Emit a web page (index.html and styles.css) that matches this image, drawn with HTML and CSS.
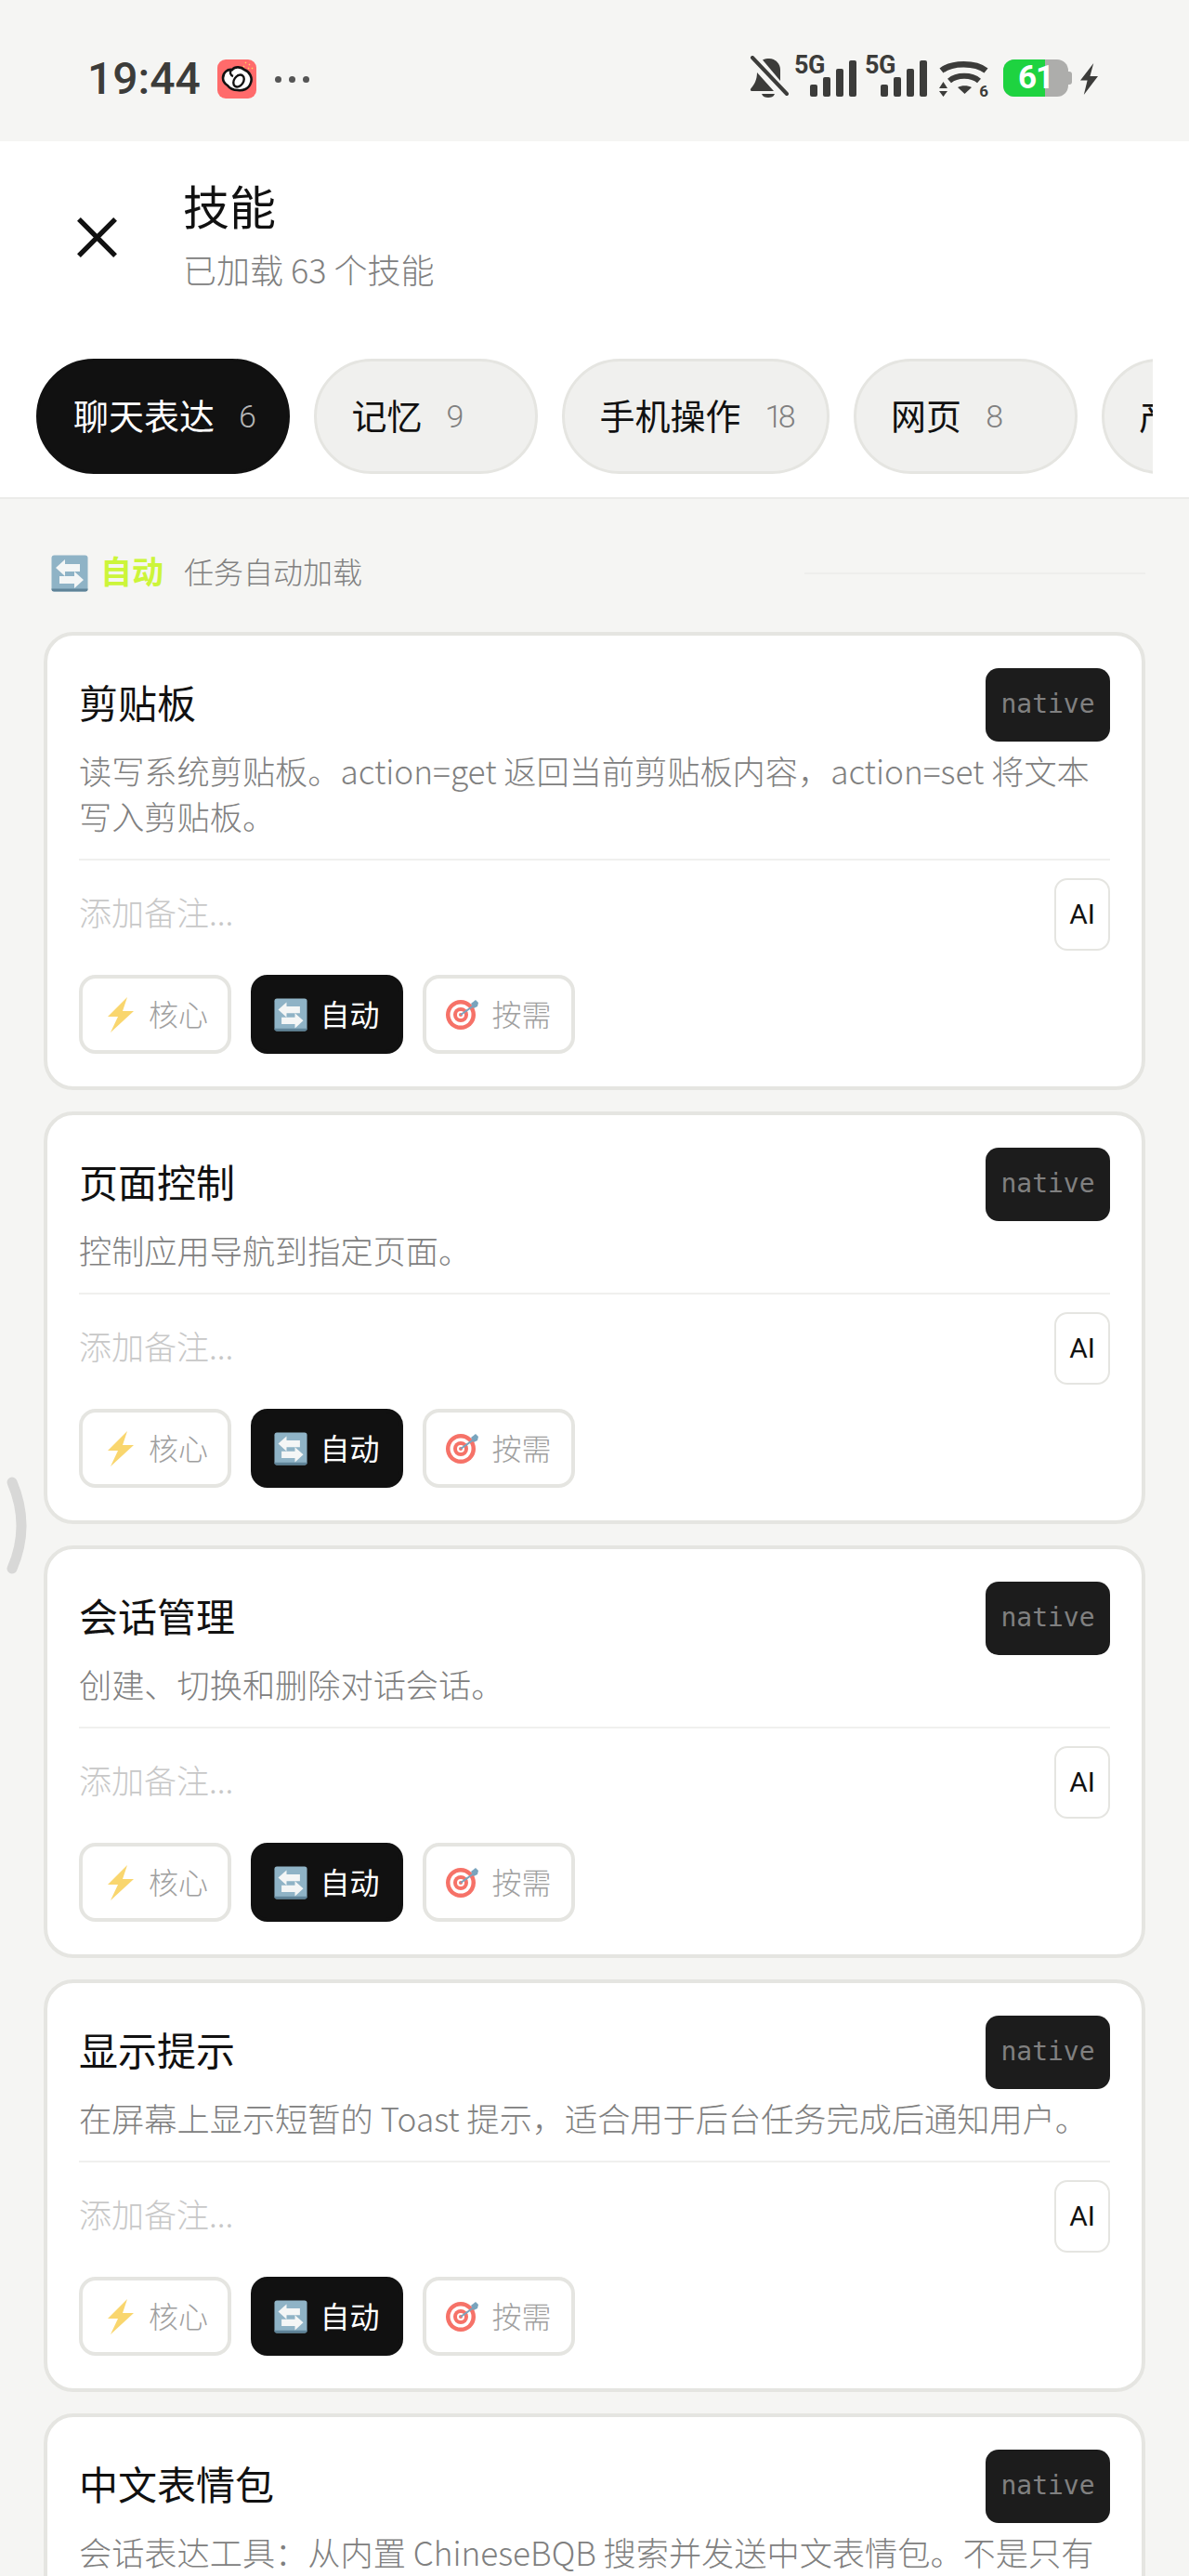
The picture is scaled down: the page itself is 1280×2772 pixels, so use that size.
FILE: index.html
```html
<!DOCTYPE html>
<html lang="zh-CN">
<head>
    <meta charset="UTF-8">
    <meta name="viewport" content="width=device-width, initial-scale=1.0">
    <title>技能</title>
    <link rel="stylesheet" href="styles.css">
</head>
<body>
    <!-- shared emoji pictures, no emoji font on the box -->
    <svg class="defs" width="0" height="0">
        <symbol id="i-cycle" viewBox="0 0 40 40">
            <rect x="0.5" y="0.5" width="39" height="39" rx="3" fill="#8fb3c6"/>
            <path d="M0.5 36.5h39v0.5a2.5 2.5 0 0 1-2.5 2.5h-34a2.5 2.5 0 0 1-2.5-2.5z" fill="#5f8398"/>
            <path d="M5 15 L15 6 V11 H31 V19 H15 V24 Z" fill="#f4f6f6" transform="translate(0 -1)"/>
            <path d="M35 26 L25 35 V30 H9 V22 H25 V17 Z" fill="#f4f6f6" transform="translate(0 1)"/>
        </symbol>
        <symbol id="i-bolt" viewBox="0 0 28 38">
            <path d="M21 0 L0 21 H11 L3 38 L28 15 H16 Z" fill="#f8c93e"/>
        </symbol>
        <symbol id="i-target" viewBox="0 3 36 36">
            <circle cx="16" cy="21" r="16" fill="#f44336"/>
            <circle cx="16" cy="21" r="11.5" fill="#fff"/>
            <circle cx="16" cy="21" r="8" fill="#f44336"/>
            <circle cx="16" cy="21" r="4" fill="#fff"/>
            <circle cx="16" cy="21" r="2" fill="#f44336"/>
            <path d="M16 21 L30 11" stroke="#4d86a8" stroke-width="2"/>
            <path d="M27 9 L32 5 L35 8 L34 12 L30 14 Z" fill="#4d86a8"/>
        </symbol>
    </svg>

    <div class="statusbar">
        <div class="status-left">
            <span class="clock">19:44</span>
            <svg class="app-icon" viewBox="0 0 42 42">
                <rect width="42" height="42" rx="9" fill="#ff6b6b"/>
                <path d="M30 3l1 1M34 5l1 1M37 9l1 1M33 9l1 1M28 7l1 1" stroke="#ffd75e" stroke-width="1.4"/>
                <path d="M6 20c0-6 5-10 10-9 3-4 10-3 13 0 6 2 9 9 7 14-2 7-9 9-14 8-4 0-8-1-11-5-3-2-5-5-5-8z" fill="#fff" stroke="#111" stroke-width="2.6"/>
                <ellipse cx="23" cy="23" rx="5" ry="7" transform="rotate(35 23 23)" fill="none" stroke="#111" stroke-width="2.4"/>
                <path d="M15 11c-2 3-1 6 2 7" fill="none" stroke="#111" stroke-width="2.4"/>
            </svg>
            <span class="dots"><i></i><i></i><i></i></span>
        </div>
        <div class="status-right">
            <svg class="ic-bell" viewBox="0 0 42 46">
                <path d="M14 4.5C16 3 19 3 21 3c7 0 12 6 12 12v12z" fill="#3c3c3a"/>
                <path d="M8 18L26 38H2.500C0.500 38 0.500 36 1.500 35 5 31 8 26 8 18z" fill="#3c3c3a"/>
                <path d="M13 41H27C26 44 23 45 20 45 17 45 14 44 13 41z" fill="#3c3c3a"/>
                <path d="M3 2L40 41" stroke="#3c3c3a" stroke-width="4" stroke-linecap="round"/>
            </svg>
            <span class="sim">
                <b>5G</b>
                <span class="bars"><i class="b1"></i><i class="b2"></i><i class="b3"></i><i class="b4"></i></span>
            </span>
            <span class="sim">
                <b>5G</b>
                <span class="bars"><i class="b1"></i><i class="b2"></i><i class="b3"></i><i class="b4"></i></span>
            </span>
            <span class="wifi">
                <svg viewBox="0 0 53 39" width="53" height="39">
                    <path d="M2.500 10C14 1 39 1 50.500 10" fill="none" stroke="#3c3c3a" stroke-width="6.500"/>
                    <path d="M11 21C19 14 35 14 43 21" fill="none" stroke="#3c3c3a" stroke-width="6"/>
                    <path d="M20 28C24 25.500 31 25.500 35 28L27.500 35z" fill="#3c3c3a"/>
                    <path d="M4.500 22L9 29H0zM0 32H9L4.500 38z" fill="#3c3c3a"/>
                </svg>
                <b>6</b>
            </span>
            <span class="battery">
                <span class="batt-body"><span class="batt-fill"></span><span class="batt-num">61</span></span>
                <span class="batt-cap"></span>
            </span>
            <svg class="ic-charge" viewBox="0 0 20 44" preserveAspectRatio="none">
                <path d="M15 0L0 24h8L4 44l16-26h-9z" fill="#3c3c3a"/>
            </svg>
        </div>
    </div>

    <div class="topbar">
        <div class="header">
            <svg class="close" viewBox="0 0 46 46">
                <path d="M3 3l40 40M43 3L3 43" stroke="#111" stroke-width="5.500"/>
            </svg>
            <div class="header-text">
                <div class="title">技能</div>
                <div class="subtitle">已加载 63 个技能</div>
            </div>
        </div>
        <div class="tabs">
            <div class="tab active">聊天表达<span class="count">6</span></div>
            <div class="tab">记忆<span class="count">9</span></div>
            <div class="tab">手机操作<span class="count">18</span></div>
            <div class="tab">网页<span class="count">8</span></div>
            <div class="tab">产品<span class="count">4</span></div>
        </div>
    </div>

    <div class="content">
        <div class="section-head">
            <svg class="emoji-lg"><use href="#i-cycle"/></svg>
            <span class="section-name">自动</span>
            <span class="section-desc">任务自动加载</span>
            <span class="section-line"></span>
        </div>

        <div class="card">
            <div class="card-head">
                <div class="card-title">剪贴板</div>
                <div class="badge">native</div>
            </div>
            <div class="card-desc">读写系统剪贴板。action=get 返回当前剪贴板内容，action=set 将文本写入剪贴板。</div>
            <div class="note-row">
                <span class="note">添加备注...</span>
                <span class="ai-btn">AI</span>
            </div>
            <div class="modes">
                <div class="mode"><svg class="emoji emoji-bolt"><use href="#i-bolt"/></svg>核心</div>
                <div class="mode on"><svg class="emoji"><use href="#i-cycle"/></svg>自动</div>
                <div class="mode"><svg class="emoji"><use href="#i-target"/></svg>按需</div>
            </div>
        </div>

        <div class="card">
            <div class="card-head">
                <div class="card-title">页面控制</div>
                <div class="badge">native</div>
            </div>
            <div class="card-desc">控制应用导航到指定页面。</div>
            <div class="note-row">
                <span class="note">添加备注...</span>
                <span class="ai-btn">AI</span>
            </div>
            <div class="modes">
                <div class="mode"><svg class="emoji emoji-bolt"><use href="#i-bolt"/></svg>核心</div>
                <div class="mode on"><svg class="emoji"><use href="#i-cycle"/></svg>自动</div>
                <div class="mode"><svg class="emoji"><use href="#i-target"/></svg>按需</div>
            </div>
        </div>

        <div class="card">
            <div class="card-head">
                <div class="card-title">会话管理</div>
                <div class="badge">native</div>
            </div>
            <div class="card-desc">创建、切换和删除对话会话。</div>
            <div class="note-row">
                <span class="note">添加备注...</span>
                <span class="ai-btn">AI</span>
            </div>
            <div class="modes">
                <div class="mode"><svg class="emoji emoji-bolt"><use href="#i-bolt"/></svg>核心</div>
                <div class="mode on"><svg class="emoji"><use href="#i-cycle"/></svg>自动</div>
                <div class="mode"><svg class="emoji"><use href="#i-target"/></svg>按需</div>
            </div>
        </div>

        <div class="card">
            <div class="card-head">
                <div class="card-title">显示提示</div>
                <div class="badge">native</div>
            </div>
            <div class="card-desc">在屏幕上显示短暂的 Toast 提示，适合用于后台任务完成后通知用户。</div>
            <div class="note-row">
                <span class="note">添加备注...</span>
                <span class="ai-btn">AI</span>
            </div>
            <div class="modes">
                <div class="mode"><svg class="emoji emoji-bolt"><use href="#i-bolt"/></svg>核心</div>
                <div class="mode on"><svg class="emoji"><use href="#i-cycle"/></svg>自动</div>
                <div class="mode"><svg class="emoji"><use href="#i-target"/></svg>按需</div>
            </div>
        </div>

        <div class="card">
            <div class="card-head">
                <div class="card-title">中文表情包</div>
                <div class="badge">native</div>
            </div>
            <div class="card-desc">会话表达工具：从内置 ChineseBQB 搜索并发送中文表情包。不是只有</div>
        </div>
    </div>

    <svg class="edge-handle" viewBox="0 0 40 124">
        <path d="M13 15Q33 62 13 108" fill="none" stroke="#d8d8d7" stroke-width="11" stroke-linecap="round"/>
    </svg>
</body>
</html>
```

FILE: styles.css
```css
* {
    box-sizing: border-box;
}
html, body {
    margin: 0;
    height: 2772px;
    overflow: hidden;
}
body {
    position: relative;
    background: #f5f5f3;
    color: #111;
    font-family: "Noto Sans CJK SC", Roboto, "Noto Sans", sans-serif;
}
.defs {
    position: absolute;
}

/* status bar */
.statusbar {
    height: 152px;
    padding: 60px 98px 0 94px;
    display: flex;
    justify-content: space-between;
    align-items: flex-start;
}
.status-left {
    display: flex;
    align-items: center;
    height: 46px;
    margin-top: 2px;
}
.clock {
    font-family: Roboto, sans-serif;
    font-weight: 500;
    font-size: 48px;
    line-height: 44px;
    color: #3c3c3a;
    width: 140px;
}
.app-icon {
    width: 42px;
    height: 42px;
}
.dots {
    display: flex;
    gap: 8px;
    margin-left: 20px;
}
.dots i {
    width: 7px;
    height: 7px;
    border-radius: 50%;
    background: #555;
}
.status-right {
    display: flex;
    align-items: flex-start;
}
.ic-bell {
    width: 42px;
    height: 46px;
}
.sim {
    position: relative;
    display: block;
    width: 66px;
    height: 44px;
    margin-left: 10px;
}
.ic-bell + .sim {
    margin-left: 7px;
}
.sim b {
    position: absolute;
    left: -1px;
    top: -4px;
    font-family: Roboto, sans-serif;
    font-size: 27px;
    line-height: 28px;
    color: #3c3c3a;
    letter-spacing: -0.5px;
}
.bars {
    position: absolute;
    right: 0;
    bottom: 0;
    display: flex;
    align-items: flex-end;
    gap: 6px;
}
.bars i {
    width: 8px;
    background: #3c3c3a;
    border-radius: 2px;
}
.b1 { height: 13px; }
.b2 { height: 21px; }
.b3 { height: 30px; }
.b4 { height: 39px; }
.wifi {
    position: relative;
    display: block;
    width: 53px;
    height: 39px;
    margin: 6px 0 0 13px;
}
.wifi svg {
    display: block;
}
.wifi b {
    position: absolute;
    right: 0;
    bottom: -2px;
    font-family: Roboto, sans-serif;
    font-size: 17px;
    line-height: 18px;
    color: #3c3c3a;
}
.battery {
    display: flex;
    align-items: center;
    margin: 4px 0 0 16px;
    height: 40px;
}
.batt-body {
    position: relative;
    display: block;
    width: 70px;
    height: 40px;
    border-radius: 12px;
    background: #adadab;
    overflow: hidden;
}
.batt-fill {
    position: absolute;
    left: 0;
    top: 0;
    bottom: 0;
    width: 45px;
    background: #1ed340;
}
.batt-num {
    position: absolute;
    left: 16px;
    top: 0;
    font-family: Roboto, sans-serif;
    font-weight: 700;
    font-size: 35px;
    line-height: 40px;
    color: #fff;
    letter-spacing: -1px;
}
.batt-cap {
    width: 4px;
    height: 14px;
    background: #adadab;
    border-radius: 0 3px 3px 0;
}
.ic-charge {
    width: 19px;
    height: 34px;
    margin: 8px 0 0 9px;
}

/* header + tabs */
.topbar {
    height: 385px;
    background: #fff;
    border-bottom: 2px solid #ebebe9;
}
.header {
    height: 234px;
    padding: 38px 0 0 82px;
    display: flex;
}
.close {
    width: 45px;
    height: 45px;
    margin-top: 43px;
}
.header-text {
    margin-left: 70px;
}
.title {
    font-size: 50px;
    line-height: 60px;
}
.subtitle {
    font-size: 36px;
    line-height: 50px;
    margin-top: 14px;
    color: #808080;
    font-weight: 300;
}
.tabs {
    display: flex;
    gap: 26px;
    padding-left: 39px;
    width: 1241px;
    overflow: hidden;
}
.tab {
    flex: none;
    min-width: 241px;
    height: 124px;
    padding: 0 38px 6px 37px;
    display: flex;
    align-items: center;
    background: #f0f0ee;
    border: 3px solid #e5e5e1;
    border-radius: 62px;
    font-size: 38px;
    white-space: nowrap;
}
.tab.active {
    background: #111;
    border-color: #111;
    color: #fff;
}
.count {
    margin-left: 26px;
    padding-top: 6px;
    font-family: Roboto, sans-serif;
    font-size: 34px;
    font-weight: 300;
    letter-spacing: -4.500px;
    color: #808080;
}
.tab.active .count {
    color: #b5b5b5;
}

/* skill list */
.content {
    padding: 0 47px;
}
.section-head {
    height: 143px;
    padding: 60px 0 0 8px;
    display: flex;
    align-items: flex-start;
}
.emoji-lg {
    width: 40px;
    height: 40px;
}
.section-name {
    margin: -3px 0 0 13px;
    font-size: 34px;
    line-height: 40px;
    font-weight: 700;
    color: #ccf53a;
}
.section-desc {
    margin: -3px 0 0 22px;
    font-size: 32px;
    line-height: 40px;
    font-weight: 300;
    color: #808080;
}
.section-line {
    flex: 1;
    height: 2px;
    margin: 19px 0 0 476px;
    background: #eeeeec;
}
.card {
    background: #fff;
    border: 4px solid #e5e5e1;
    border-radius: 32px;
    padding: 35px 34px 35px;
    margin-bottom: 23px;
}
.card-head {
    display: flex;
    justify-content: space-between;
    align-items: center;
    height: 79px;
}
.card-title {
    font-size: 42px;
    padding-bottom: 8px;
}
.badge {
    width: 134px;
    height: 79px;
    background: #1c1c1c;
    border-radius: 14px;
    text-align: center;
    font-family: "DejaVu Sans Mono", monospace;
    font-size: 28px;
    line-height: 78px;
    color: #808080;
}
.card-desc {
    margin-top: 6px;
    font-size: 35.200px;
    line-height: 49px;
    font-weight: 300;
    color: #808080;
}
.note-row {
    margin-top: 22px;
    padding-top: 19px;
    border-top: 2px solid #f0f0ee;
    display: flex;
    justify-content: space-between;
    align-items: center;
}
.note {
    padding-bottom: 8px;
    font-size: 35px;
    font-weight: 300;
    color: #c8c8c8;
}
.ai-btn {
    width: 60px;
    height: 78px;
    border: 2px solid #e5e5e1;
    border-radius: 14px;
    text-align: center;
    font-family: Roboto, sans-serif;
    font-size: 30px;
    line-height: 74px;
}
.modes {
    display: flex;
    gap: 21px;
    margin-top: 26px;
}
.mode {
    width: 164px;
    height: 85px;
    padding-bottom: 4px;
    border: 4px solid #e5e5e1;
    border-radius: 18px;
    display: flex;
    align-items: center;
    justify-content: center;
    font-size: 32px;
    font-weight: 300;
    color: #a0a0a0;
}
.mode.on {
    background: #111;
    border-color: #111;
    color: #fff;
    font-weight: 400;
}
.emoji {
    width: 36px;
    height: 38px;
    margin: 4px 13px 0 0;
    opacity: 0.75;
}
.mode.on .emoji {
    opacity: 1;
}
.emoji-bolt {
    width: 28px;
    margin: 4px 16px 0 6px;
}

.edge-handle {
    position: absolute;
    left: 0;
    top: 1580px;
    width: 40px;
    height: 124px;
}
```
